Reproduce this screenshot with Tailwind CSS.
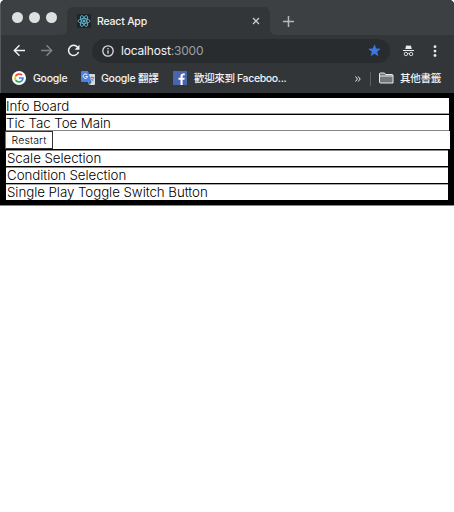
<!DOCTYPE html>
<html lang="zh-Hant"><head><meta charset="utf-8"><title>React App</title>
<script src="https://cdn.jsdelivr.net/npm/@tailwindcss/browser@4"></script></head>
<body class="bg-white w-[454px] h-[512px] overflow-hidden font-['Inter','Noto_Sans_CJK_TC',sans-serif] text-black">
<header class="h-[93px] bg-[#323639] rounded-t-[5px] overflow-hidden text-[#f1f3f4] border-l border-[#55595c]">
  <div class="h-[35px] bg-[#3c4043] flex">
    <div class="w-[66px] bg-[#323639]"><div class="h-full bg-[#3c4043] rounded-br-[6px] flex gap-[6px] pl-[11px] pt-[12px]">
      <i class="size-[11px] rounded-full bg-[#dedfdf]"></i><i class="size-[11px] rounded-full bg-[#dedfdf]"></i><i class="size-[11px] rounded-full bg-[#dedfdf]"></i>
    </div></div>
    <div class="w-[203px] bg-[#3c4043] pt-[7px]"><div class="h-[28px] bg-[#323639] rounded-t-[6px] flex items-center pl-[10px] pr-[10px]">
      <svg class="size-[14px] shrink-0" viewBox="0 0 14 14" fill="none" stroke="#61bcd8" stroke-width=".85"><rect width="14" height="14" rx="1" fill="#202427" stroke="none"/><ellipse cx="7" cy="7" rx="6" ry="2.4"/><ellipse cx="7" cy="7" rx="6" ry="2.4" transform="rotate(60 7 7)"/><ellipse cx="7" cy="7" rx="6" ry="2.4" transform="rotate(120 7 7)"/><circle cx="7" cy="7" r="1" fill="#61bcd8"/></svg>
      <span class="ml-[6px] pt-px text-[10.5px] tracking-[-0.2px] font-medium whitespace-nowrap">React App</span>
      <svg class="ml-auto size-[8px]" viewBox="0 0 8 8" stroke="#c8cacc" stroke-width="1.3"><path d="M1 1l6 6M7 1L1 7"/></svg>
    </div></div>
    <div class="bg-[#323639] grow"><div class="h-full bg-[#3c4043] rounded-bl-[6px] pl-[13px] pt-[16px]"><svg class="size-[11px]" viewBox="0 0 11 11" stroke="#b5b8ba" stroke-width="1.5"><path d="M5.5 0v11M0 5.5h11"/></svg></div></div>
  </div>
  <div class="h-[31px] flex items-center">
    <svg class="ml-[12px] size-[13px]" viewBox="0 0 13 13" fill="none" stroke="#f1f3f4" stroke-width="1.4"><path d="M12 6.5H1.5M6.5 1.3L1.3 6.5l5.2 5.2"/></svg>
    <svg class="ml-[14px] size-[13px]" viewBox="0 0 13 13" fill="none" stroke="#808487" stroke-width="1.4"><path d="M1 6.5h10.5M6.5 1.3l5.2 5.2-5.2 5.2"/></svg>
    <svg class="ml-[14px] size-[13px]" viewBox="0 0 13 13" fill="none" stroke="#f1f3f4" stroke-width="1.5"><path d="M11.5 8A5.1 5.1 0 1 1 10.6 3.2L11.5 4.2"/><path d="M12.5 .8v4.9H7.6z" fill="#f1f3f4" stroke="none"/></svg>
    <div class="ml-[12px] w-[298px] h-[24px] rounded-full bg-[#282c2f] flex items-center pl-[10px] pr-[9px]">
      <svg class="size-[12px] shrink-0" viewBox="0 0 12 12" fill="none" stroke="#dcdee0" stroke-width="1.3"><circle cx="6" cy="6" r="5.2"/><path d="M6 5.3v3.5M6 3v1.3"/></svg>
      <span class="ml-[7px] text-[12px] tracking-[-0.18px] whitespace-nowrap">localhost<span class="text-[#9aa0a6]">:3000</span></span>
      <svg class="ml-auto size-[13px]" viewBox="0 0 13 13" fill="#3878e0"><path d="M6.5.2l1.7 4.3 4.6.3-3.6 2.9 1.2 4.6-3.9-2.6-3.9 2.6 1.2-4.6L.2 4.8l4.6-.3z"/></svg>
    </div>
    <svg class="ml-[13px] w-[11px] h-[12px]" viewBox="0 0 11 12" fill="#e8eaed"><path d="M3 .8l1-.4 1.500.4L7 .4l1 .4L8.700 4H2.300zM0 5h11v1H0z"/><g fill="none" stroke="#e8eaed" stroke-width=".9"><circle cx="2.900" cy="9" r="1.700"/><circle cx="8.100" cy="9" r="1.700"/><path d="M4.500 8.800q1-.8 2 0"/></g></svg>
    <svg class="ml-[19px] w-[4px] h-[12px]" viewBox="0 0 4 12" fill="#e8eaed"><circle cx="2" cy="1.700" r="1.400"/><circle cx="2" cy="6.100" r="1.400"/><circle cx="2" cy="10.500" r="1.400"/></svg>
  </div>
  <div class="h-[25px] flex items-center text-[10.5px] tracking-[-0.24px] font-medium whitespace-nowrap">
    <svg class="ml-[11px] -mt-px size-[14px] shrink-0" viewBox="0 0 14 14" fill="none" stroke-width="1.700"><circle cx="7" cy="7" r="7" fill="white"/><path stroke="#ea4335" d="M3.600 5A4 4 0 0 1 9.900 4.200"/><path stroke="#fbbc05" d="M3.600 5a4 4 0 0 0 0 4"/><path stroke="#34a853" d="M3.600 9a4 4 0 0 0 6 1"/><path stroke="#4285f4" d="M9.600 10A4 4 0 0 0 11 7H7"/></svg>
    <span class="ml-[7px] w-[35px]">Google</span>
    <svg class="ml-[13px] -mt-px size-[14px] shrink-0" viewBox="0 0 14 14"><path d="M5 3h8q1 0 1 1v9q0 1-1 1H8z" fill="#d7dadd"/><path d="M1 0h6l3.500 11H1q-1 0-1-1V1q0-1 1-1z" fill="#4b82e8"/><path d="M7.500 11h3L8.500 14z" fill="#3460b9"/><path d="M6.300 4A2.200 2.200 0 1 0 6.600 5.600H4.500" fill="none" stroke="white"/><path d="M9.300 6.500h4M11.200 5.500v1M12.600 6.700q-.6 2.500-2.300 3.500M10 7.800l2.500 2.400" stroke="#737a82" stroke-width=".8" fill="none"/></svg>
    <span class="ml-[6px] w-[58px]">Google 翻譯</span>
    <svg class="ml-[14px] -mt-px size-[14px] shrink-0" viewBox="0 0 14 14"><path fill="#4865ad" d="M0 0h14v14H0z"/><path fill="white" d="M7.500 14V8.700H5.500v-2h2V5.100Q7.500 2.400 10 2.400h1.800v1.900h-1.200q-1 0-1 1v1.400h2.100l-.3 2H9.600V14z"/></svg>
    <span class="ml-[7px] w-[94px] tracking-[-0.36px]">歡迎來到 Faceboo...</span>
    <svg class="ml-[67px] size-[6px] shrink-0" viewBox="0 0 6 6" fill="none" stroke="#e8eaed"><path d="M.5.5L2.500 3 .5 5.500M3.200.5L5.200 3 3.200 5.500"/></svg>
    <i class="ml-[9px] w-px h-[14px] bg-[#5a5e61]"></i>
    <svg class="ml-[8px] -mt-px w-[15px] h-[12px] shrink-0" viewBox="0 0 15 12" fill="#73777a" stroke="#e8eaed"><path d="M1.500 1h4l1 1.500h6.500q1 0 1 1V11H1.500q-1 0-1-1V2q0-1 1-1z"/><path d="M1 4h13"/></svg>
    <span class="ml-[6px]">其他書籤</span>
  </div>
</header>
<main class="h-[113px] bg-black pt-[5px] pl-[5px] border-b border-[#888] text-[13.3px] font-light tracking-[-0.05px] leading-[16px] whitespace-nowrap">
  <div class="ml-px w-[443px] h-[16px] bg-white border-b border-[#999]">Info Board</div>
  <div class="ml-px mt-px w-[443px] h-[16px] bg-white border-b border-[#888]">Tic Tac Toe Main</div>
  <div class="w-[445px] h-[18px] bg-white"><button class="block w-[48px] h-[18px] border border-l-[#777] border-[#333] text-[10.5px] leading-[15px] tracking-[0.1px]">Restart</button></div>
  <div class="ml-px mt-px w-[442px] h-[16px] pl-px bg-white border-t border-[#888] leading-[14px]">Scale Selection</div>
  <div class="ml-px mt-px w-[442px] h-[16px] pl-px bg-white border-t border-[#888] leading-[14px]">Condition Selection</div>
  <div class="ml-px mt-px w-[442px] h-[16px] pl-px bg-white border-t border-[#aaa] leading-[14px]">Single Play Toggle Switch Button</div>
</main>
</body></html>
